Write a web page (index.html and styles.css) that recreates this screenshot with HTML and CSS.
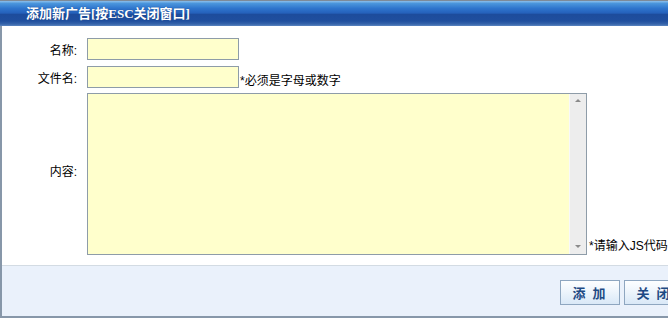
FILE: index.html
```html
<!DOCTYPE html>
<html lang="zh-CN">
<head>
  <meta charset="UTF-8" />
  <title>添加新广告</title>
  <link rel="stylesheet" href="styles.css">
</head>
<body>
  <div class="dialog">
    <div class="dialog-title">添加新广告[按ESC关闭窗口]</div>

    <form class="dialog-body" onsubmit="return false;">
      <div class="form-grid">
        <label class="form-label" for="adName">名称:</label>
        <div class="form-field">
          <input type="text" id="adName" class="text-input" />
        </div>

        <label class="form-label" for="adFile">文件名:</label>
        <div class="form-field">
          <input type="text" id="adFile" class="text-input" />
          <span class="hint">*必须是字母或数字</span>
        </div>

        <label class="form-label label-code" for="adCode">内容:</label>
        <div class="form-field field-code">
          <div class="code-box">
            <textarea id="adCode" class="code-input"></textarea>
            <div class="fake-scroll">
              <span class="arrow arrow-up"></span>
              <span class="arrow arrow-down"></span>
            </div>
          </div>
          <span class="hint hint-code">*请输入JS代码</span>
        </div>
      </div>
    </form>

    <div class="dialog-footer">
      <button type="button" class="btn">添 加</button>
      <button type="button" class="btn">关 闭</button>
    </div>
  </div>
</body>
</html>
```

FILE: styles.css
```css
html, body {
  margin: 0;
  padding: 0;
  overflow: hidden;
  background: #fff;
}
body {
  font-family: "Liberation Sans", "Noto Sans CJK SC", sans-serif;
  font-size: 12px;
  color: #000;
}

.dialog {
  width: 690px;
  border-left: 2px solid #8797a9;
  border-bottom: 2px solid #8797a9;
}

/* ---------- title bar ---------- */
.dialog-title {
  height: 25px;
  line-height: 25px;
  margin-left: -2px;
  padding-left: 26px;
  border-top: 1px solid #7d8a98;
  background: linear-gradient(#8cc0ec 0, #4a95dc 10%, #2e74cc 30%, #2561bb 48%, #1d4c9c 54%, #204f9e 80%, #3563aa 92%, #5a84bf 100%);
  color: #fff;
  font-family: "Liberation Serif", "Noto Sans CJK SC", serif;
  font-size: 13px;
  font-weight: bold;
  text-shadow: 0 0 1px #17407e;
}

/* ---------- form ---------- */
.dialog-body {
  margin: 0;
  padding: 12px 0 0;
  height: 239px;
  box-sizing: border-box;
}
.form-grid {
  display: grid;
  grid-template-columns: 78px 1fr;
  column-gap: 7px;
  row-gap: 6px;
}
.form-label {
  align-self: center;
  text-align: right;
  padding-right: 3px;
}
.label-code { margin-bottom: 8px; }
.form-field {
  display: flex;
  align-items: flex-end;
}
.field-code { margin-top: -1px; }

.text-input {
  box-sizing: border-box;
  width: 152px;
  height: 22px;
  margin: 0;
  padding: 2px 3px;
  border: 1px solid #8e9ca8;
  background: #ffffcc;
  font: inherit;
  outline: none;
}

.hint { margin-left: 1px; line-height: 14px; }
.hint-code { margin-left: 2px; margin-bottom: 2px; }

.code-box {
  box-sizing: border-box;
  display: flex;
  width: 500px;
  height: 162px;
  border: 1px solid #8e9ca8;
  background: #ffffcc;
}
.code-input {
  flex: 1;
  margin: 0;
  padding: 3px;
  border: none;
  background: transparent;
  resize: none;
  overflow: hidden;
  font: inherit;
  outline: none;
}
.fake-scroll {
  position: relative;
  width: 16px;
  background: #ededed;
  border-left: 1px solid #f8f8f8;
}
.arrow {
  position: absolute;
  left: 5px;
  width: 0;
  height: 0;
  border-left: 3px solid transparent;
  border-right: 3px solid transparent;
}
.arrow-up { top: 5px; border-bottom: 3px solid #8a8a8a; }
.arrow-down { bottom: 6px; border-top: 3px solid #8a8a8a; }

/* ---------- footer ---------- */
.dialog-footer {
  display: flex;
  justify-content: flex-end;
  gap: 4px;
  height: 51px;
  padding: 14px 8px 0 0;
  box-sizing: border-box;
  border-top: 1px solid #d3dbe3;
  background: #eaf1fb;
}
.btn {
  width: 60px;
  height: 25px;
  padding: 0;
  border: 1px solid #8ea6c0;
  background: linear-gradient(#fdfeff 0, #eef5fc 45%, #d9e8f7 100%);
  color: #1e4a84;
  font-family: "Noto Sans CJK SC", sans-serif;
  font-size: 13px;
  font-weight: bold;
  letter-spacing: 2px;
  cursor: pointer;
}
.btn:hover { background: linear-gradient(#ffffff, #cfe2f6); }
```
